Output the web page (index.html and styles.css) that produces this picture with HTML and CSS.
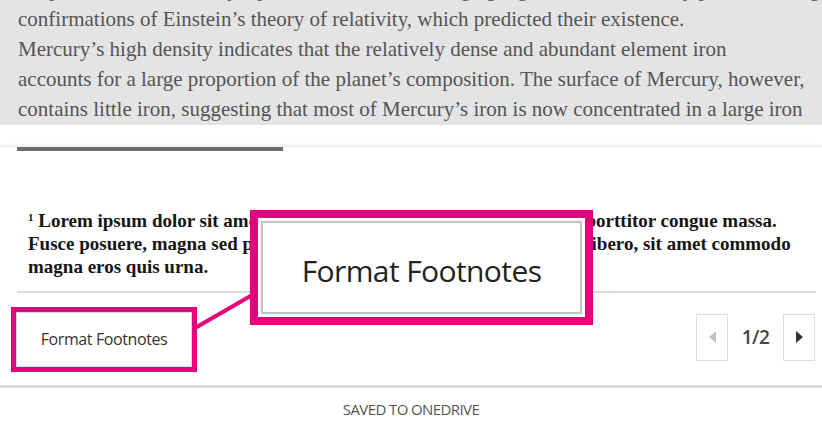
FILE: index.html
```html
<!DOCTYPE html>
<html lang="en">
  <head>
    <meta charset="UTF-8" />
    <meta name="viewport" content="width=device-width, initial-scale=1.0" />
    <title>Format Footnotes</title>
    <link rel="stylesheet" href="styles.css">
  </head>

  <body>
    <div class="screen">
      <div class="doc">
        <p class="doc-text">
          the precession of Mercury’s perihelion, observed long ago, gave one of the early proofs, among the<br>
          confirmations of Einstein’s theory of relativity, which predicted their existence.<br>
          Mercury’s high density indicates that the relatively dense and abundant element iron<br>
          accounts for a large proportion of the planet’s composition. The surface of Mercury, however,<br>
          contains little iron, suggesting that most of Mercury’s iron is now concentrated in a large iron
        </p>
      </div>

      <div class="panel">
        <div class="note-rule"></div>
        <p class="footnote">
          <sup>1</sup> Lorem ipsum dolor sit amet, consectetuer adipiscing elit. Maecenas porttitor congue massa.<br>
          Fusce posuere, magna sed pulvinar ultricies, purus lectus malesuada libero, sit amet commodo<br>
          magna eros quis urna.
        </p>
        <div class="divider"></div>

        <div class="toolbar">
          <button class="fmt-btn">Format Footnotes</button>
          <div class="pager">
            <button class="page-btn"><span class="tri tri-left"></span></button>
            <span class="page-num">1/2</span>
            <button class="page-btn"><span class="tri tri-right"></span></button>
          </div>
        </div>

        <div class="status">SAVED TO ONEDRIVE</div>
      </div>

      <!-- callout over the page -->
      <svg class="connector" width="66" height="42" viewBox="0 0 66 42">
        <line x1="4" y1="38" x2="63" y2="4" stroke="#e6007e" stroke-width="4" />
      </svg>
      <div class="callout">
        <div class="callout-inner">Format Footnotes</div>
      </div>
    </div>
  </body>
</html>
```

FILE: styles.css
```css
body {
  margin: 0;
  background-color: #fff;
  font-family: "Open Sans", "Noto Sans", sans-serif;
}

.screen {
  position: relative;
  width: 822px;
  height: 430px;
  overflow: hidden;
}

.doc {
  height: 125px;
  overflow: hidden;
  background-color: #e4e4e4;
}

.doc-text {
  margin: -26px 0 0;
  padding-left: 18px;
  white-space: nowrap;
  font: 21px/30px "Liberation Serif", serif;
  color: #555;
}

.panel {
  position: relative;
  background-color: #fff;
  box-shadow: 0 -2px 4px rgba(0, 0, 0, 0.08);
}

.note-rule {
  width: 266px;
  height: 4px;
  margin: 22px 0 0 17px;
  background-color: #6e6e6e;
}

.footnote {
  margin: 58px 0 0;
  padding-left: 28px;
  white-space: nowrap;
  font: bold 19px/23px "Liberation Serif", serif;
  color: #151515;
}

.footnote sup {
  font-size: 11px;
  vertical-align: 6px;
  line-height: 0;
}

.divider {
  height: 2px;
  margin: 13px 6px 0 17px;
  background-color: #dcdcdc;
}

.toolbar {
  display: flex;
  justify-content: space-between;
  align-items: center;
  height: 92px;
  padding: 0 7px 0 16px;
}

.fmt-btn {
  width: 176px;
  height: 55px;
  padding: 0;
  background-color: #fff;
  border: 1px solid #d6d6d6;
  outline: 5px solid #e6007e;
  font-family: "Open Sans", sans-serif;
  font-size: 16px;
  letter-spacing: -0.4px;
  color: #333;
}

.pager {
  display: flex;
  align-items: center;
  margin-top: -4px;
}

.page-btn {
  display: flex;
  align-items: center;
  justify-content: center;
  width: 32px;
  height: 47px;
  padding: 0;
  background-color: #fff;
  border: 1px solid #dcdcdc;
}

.page-num {
  width: 55px;
  text-align: center;
  font-size: 19px;
  font-weight: 600;
  letter-spacing: -0.5px;
  color: #444;
}

.tri {
  width: 0;
  height: 0;
  border-top: 6px solid transparent;
  border-bottom: 6px solid transparent;
}

.tri-left {
  border-right: 7px solid #c2c2c2;
}

.tri-right {
  border-left: 7px solid #333;
}

.status {
  height: 42px;
  padding-top: 12px;
  box-sizing: border-box;
  border-top: 3px solid #dcdcdc;
  text-align: center;
  font-size: 15px;
  line-height: 18px;
  letter-spacing: -0.6px;
  color: #555;
}

.connector {
  position: absolute;
  left: 191px;
  top: 290px;
}

.callout {
  position: absolute;
  left: 250px;
  top: 210px;
  width: 343px;
  height: 115px;
  box-sizing: border-box;
  padding: 3px;
  background-color: #fff;
  border: 8px solid #e6007e;
}

.callout-inner {
  display: flex;
  align-items: center;
  justify-content: center;
  height: 100%;
  box-sizing: border-box;
  padding-top: 6px;
  border: 2px solid #c4c4c4;
  font-size: 30px;
  letter-spacing: -0.6px;
  color: #222;
}
```
